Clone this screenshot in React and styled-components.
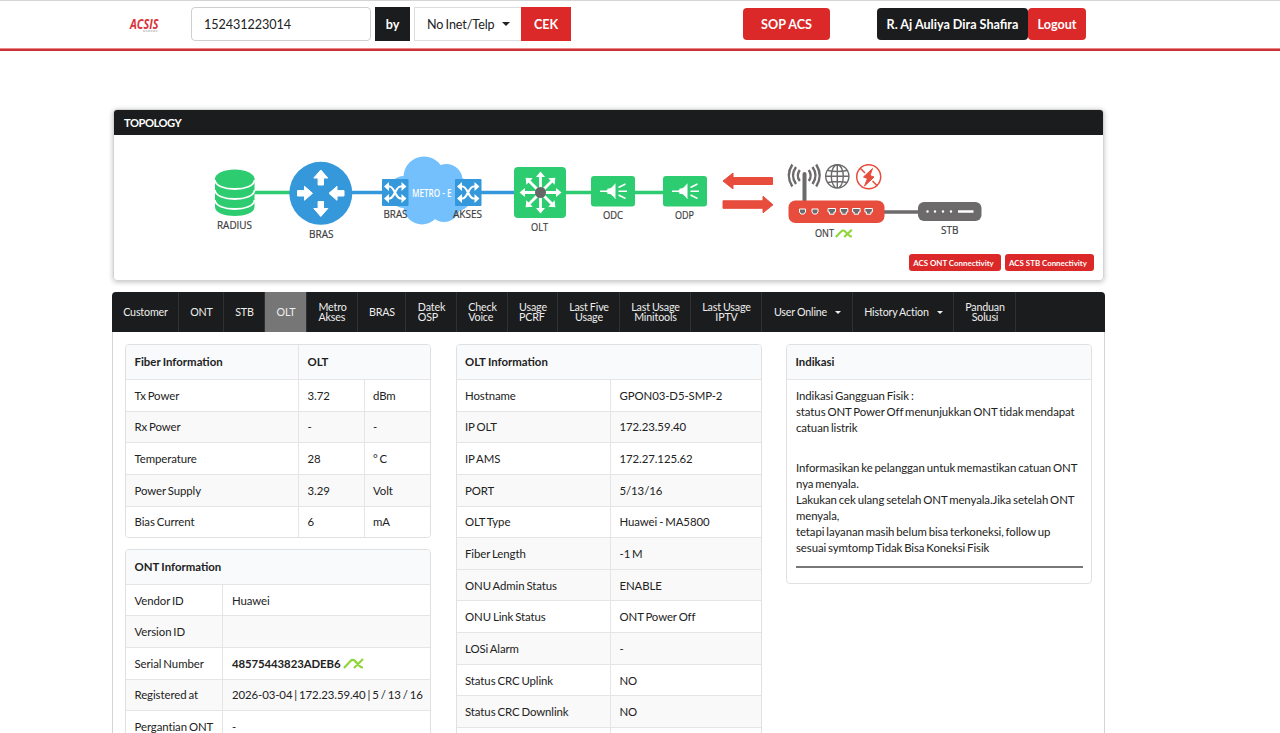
import React from "react";
import styled, { createGlobalStyle, css } from "styled-components";

const GlobalStyle = createGlobalStyle`
  * {
    box-sizing: border-box;
  }
  body {
    margin: 0;
    height: 733px;
    overflow: hidden;
    background: #fff;
    color: #222;
    font-family: Lato, "Liberation Sans", sans-serif;
    font-size: 11.4px;
    word-spacing: -0.9px;
  }
`;

const Header = styled.header`
  display: flex;
  align-items: center;
  height: 51px;
  padding: 0 0 2px 128px;
  border-top: 1px solid #d4d4d5;
  border-bottom: 2px solid #c93338;
  box-shadow: inset 0 -1px #ee8888;
  font-size: 12.6px;
`;

const Logo = styled.svg`
  width: 36px;
  height: 18px;
  margin-right: 27px;
`;

const SearchInput = styled.input`
  width: 180px;
  height: 34px;
  padding: 0 12px;
  border: 1px solid #cfcfd0;
  border-radius: 4px;
  font: inherit;
  color: #222;
  letter-spacing: -0.05px;
`;

const ByLabel = styled.span`
  display: flex;
  align-items: center;
  justify-content: center;
  width: 35px;
  height: 34px;
  margin: 0 4px;
  background: #1b1c1d;
  color: #fff;
  font-weight: 700;
`;

const Dropdown = styled.div`
  display: flex;
  align-items: center;
  width: 107px;
  height: 34px;
  padding-left: 12px;
  border: 1px solid #dededf;
  border-right: 0;
  letter-spacing: -0.1px;
  white-space: nowrap;
`;

const Caret = styled.i`
  margin-left: ${(props) => props.gap || "7px"};
  border: ${(props) => props.size || "4px"} solid transparent;
  border-top-color: currentColor;
  border-bottom: 0;
`;

const Button = styled.button`
  width: ${(props) => props.width};
  height: ${(props) => props.height || "32px"};
  margin: 0 0 0 ${(props) => props.gap || "0"};
  padding: 0;
  border: 0;
  border-radius: ${(props) => (props.square ? "0" : "4px")};
  background: ${(props) => (props.dark ? "#1b1c1d" : "#db2828")};
  color: #fff;
  font-family: inherit;
  font-size: 12.6px;
  font-weight: 700;
  white-space: nowrap;
`;

const Main = styled.main`
  width: 993px;
  margin: 58px 0 0 112px;
`;

const Topology = styled.section`
  height: 172px;
  margin: 0 1px;
  overflow: hidden;
  border: 1px solid #d4d4d5;
  border-radius: 4px;
  box-shadow: 0 1px 5px rgba(34, 36, 38, 0.3);
`;

const TopologyTitle = styled.h2`
  height: 25px;
  margin: 0;
  padding: 0 10px;
  background: #1b1c1d;
  color: #fff;
  font-size: 11.2px;
  font-weight: 700;
  letter-spacing: -0.5px;
  line-height: 26px;
`;

const Diagram = styled.svg`
  display: block;
  width: 989px;
  height: 119px;
  font-family: "Open Sans", "Noto Sans", sans-serif;
  font-size: 10.8px;
  word-spacing: 0;
`;

const Actions = styled.div`
  display: flex;
  justify-content: flex-end;
  gap: 4px;
  padding-right: 9px;
`;

const MiniButton = styled.button`
  width: ${(props) => props.width};
  height: 17px;
  padding: 0 3px 0 0;
  border: 0;
  border-radius: 3px;
  background: #db2828;
  color: #fff;
  font-family: inherit;
  font-size: 7.9px;
  font-weight: 700;
  white-space: nowrap;
`;

const Menu = styled.nav`
  display: flex;
  height: 40px;
  margin-top: 11px;
  overflow: hidden;
  border-radius: 4px 4px 0 0;
  background: #1b1c1d;
`;

const MenuItem = styled.a`
  display: flex;
  align-items: center;
  justify-content: center;
  flex: none;
  width: ${(props) => props.width}px;
  padding-left: 1px;
  border-right: 1px solid #2f3031;
  color: #eee;
  font-size: 10.7px;
  letter-spacing: -0.15px;
  word-spacing: -0.5px;
  line-height: 10px;
  text-align: ${(props) => props.align || "left"};
  white-space: pre;
  ${(props) =>
    props.active &&
    css`
      background: #767676;
    `}
`;

const Panel = styled.div`
  display: grid;
  grid-template-columns: 306px 306px 306px;
  gap: 24.5px;
  align-items: start;
  height: 420px;
  padding: 12px 12px 0;
  border: 1px solid #d4d4d5;
  border-top: 0;
  letter-spacing: -0.08px;
`;

const Column = styled.div`
  display: grid;
  gap: 10.5px;
`;

const Card = styled.section`
  overflow: hidden;
  border: 1px solid #dfe0e1;
  border-radius: 4px;
`;

const Row = styled.div`
  display: grid;
  grid-template-columns: ${(props) => props.columns};
  height: 31.65px;
  border-top: 1px solid #e5e5e6;
  background: ${(props) => (props.striped ? "#f9f9f9" : "#fff")};
`;

const Cell = styled.div`
  display: flex;
  align-items: center;
  padding-left: 8.5px;
  font-weight: ${(props) => (props.bold ? 700 : "inherit")};
  white-space: nowrap;

  & + & {
    border-left: 1px solid #e5e5e6;
  }
`;

const HeadRow = styled(Row)`
  height: 34px;
  border-top: 0;
  background: #f9fafb;
  font-weight: 700;
  letter-spacing: 0;
  word-spacing: -0.4px;

  ${Cell} {
    padding-bottom: 1px;
  }
`;

const Note = styled.div`
  padding: 8px 8px 15px 9px;
  border-top: 1px solid #e5e5e6;
  line-height: 15.95px;
  white-space: pre;
`;

const Paragraph = styled.p`
  margin: 0 0 ${(props) => props.gap || "0"};
`;

const Rule = styled.hr`
  height: 2px;
  margin: 10.5px 0 0;
  border: 0;
  background: #777;
`;

const MarkIcon = styled.svg`
  width: 21px;
  height: 11px;
  margin-left: 2px;
`;

const menuItems = [
  { label: "Customer", width: 67 },
  { label: "ONT", width: 45 },
  { label: "STB", width: 41 },
  { label: "OLT", width: 42, active: true },
  { label: "Metro\nAkses", width: 51 },
  { label: "BRAS", width: 48 },
  { label: "Datek\nOSP", width: 51 },
  { label: "Check\nVoice", width: 51 },
  { label: "Usage\nPCRF", width: 50 },
  { label: "Last Five\nUsage", width: 62, align: "center" },
  { label: "Last Usage\nMinitools", width: 71, align: "center" },
  { label: "Last Usage\nIPTV", width: 71, align: "center" },
  { label: "User Online", width: 91, dropdown: true },
  { label: "History Action", width: 101, dropdown: true },
  { label: "Panduan\nSolusi", width: 62, align: "center" },
];

const fiberRows = [
  ["Tx Power", "3.72", "dBm"],
  ["Rx Power", "-", "-"],
  ["Temperature", "28", "° C"],
  ["Power Supply", "3.29", "Volt"],
  ["Bias Current", "6", "mA"],
];

const ontRows = [
  ["Vendor ID", "Huawei"],
  ["Version ID", ""],
  ["Serial Number", "48575443823ADEB6"],
  ["Registered at", "2026-03-04 | 172.23.59.40 | 5 / 13 / 16"],
  ["Pergantian ONT", "-"],
];

const oltRows = [
  ["Hostname", "GPON03-D5-SMP-2"],
  ["IP OLT", "172.23.59.40", true],
  ["IP AMS", "172.27.125.62"],
  ["PORT", "5/13/16", true],
  ["OLT Type", "Huawei - MA5800"],
  ["Fiber Length", "-1 M", true],
  ["ONU Admin Status", "ENABLE", true],
  ["ONU Link Status", "ONT Power Off"],
  ["LOSi Alarm", "-", true],
  ["Status CRC Uplink", "NO"],
  ["Status CRC Downlink", "NO", true],
  ["", ""],
];

const markPath = "M1 10L7.500 3Q10 0.500 12.500 3.500L15 6.500Q17.500 9.500 20 9.500M11 10L20 1";

const ShuffleIcon = ({ x, y }) => (
  <g transform={`translate(${x} ${y})`}>
    <rect width="26.5" height="27" rx="1" fill="#3498db" />
    <path
      d="M5 7.5h2.5c5 0 6 12 11 12h3M5 19.5h2.5c5 0 6-12 11-12h3"
      fill="none"
      stroke="#fff"
      strokeWidth="2.2"
    />
    <path
      d="M19.500 3l5 4.500-5 4.500zM19.500 15l5 4.500-5 4.500zM7 3l-5 4.500 5 4.500zM7 15l-5 4.500 5 4.500z"
      fill="#fff"
    />
  </g>
);

const SplitterIcon = ({ x }) => (
  <g transform={`translate(${x} 176)`}>
    <rect width="44" height="30.5" rx="3" fill="#2ecc71" />
    <path d="M9 14.4h6c4-1 7-4 9.500-7.200v16c-2.500-3.200-5.500-6.200-9.500-7.200H9z" fill="#fff" />
    <path d="M16.500 12.500h5v5.500h-5z" fill="#fff" />
    <path
      d="M27.500 11.500l7-3.500M27.500 15.200h8.500M27.500 19l7 3.500"
      stroke="#fff"
      strokeWidth="1.500"
    />
  </g>
);

const portXs = [828.5, 840.8, 853.1, 865.4];
const spokes = [0, 45, 90, 135, 180, 225, 270, 315];

const TopologyDiagram = () => (
  <Diagram viewBox="114 135 989 119">
    <path d="M250 192.500h45M565 192.500h105" stroke="#2ecc71" strokeWidth="3.500" />
    <path d="M350 192.500h35M480 192.500h36" stroke="#3498db" strokeWidth="3.500" />

    <g fill="#2ecc71">
      <path d="M215 178v29c0 12 39.500 12 39.500 0v-29z" />
      <ellipse cx="234.700" cy="179" rx="19.700" ry="9.500" />
    </g>
    <path
      d="M215 180c0 12 39.500 12 39.500 0M215 190c0 12 39.500 12 39.500 0M215 200c0 12 39.500 12 39.500 0"
      fill="none"
      stroke="#fff"
      strokeWidth="1.800"
    />

    <circle cx="320.800" cy="193.300" r="31.500" fill="#3498db" />
    <g fill="#fff" stroke="#fff" strokeLinejoin="round">
      <path d="M320.800 170l7 8h-4.300v7h-5.400v-7h-4.300z" />
      <path d="M320.800 216.500l7-8h-4.300v-7h-5.400v7h-4.300z" />
      <path d="M312.500 193.300l-8-7v4.300h-7v5.400h7v4.300z" />
      <path d="M329 193.300l8-7v4.300h7v5.400h-7v4.300z" />
    </g>

    <g fill="#74c0fc">
      <circle cx="424" cy="177" r="20.500" />
      <circle cx="446.500" cy="180" r="16" />
      <circle cx="404" cy="192" r="16" />
      <circle cx="422" cy="206" r="18.500" />
      <circle cx="444" cy="206" r="16" />
      <circle cx="456" cy="194" r="17" />
    </g>
    <ShuffleIcon x={382} y={179} />
    <ShuffleIcon x={455} y={179} />
    <text
      x="412"
      y="197"
      fill="#fff"
      fontWeight="600"
      textLength="39.500"
      lengthAdjust="spacingAndGlyphs"
    >
      METRO - E
    </text>

    <rect x="514" y="167" width="52" height="51" rx="4" fill="#2ecc71" />
    {spokes.map((angle) => (
      <g key={angle} transform={`translate(540.5 192.500) rotate(${angle})`}>
        <path d="M0 0v-17" stroke="#fff" strokeWidth="2.800" />
        <path d="M-4.500-15.500L0-21l4.500 5.500z" fill="#fff" />
      </g>
    ))}
    <circle cx="540.500" cy="192.500" r="5.500" fill="#666" />

    <SplitterIcon x={591} />
    <SplitterIcon x={663} />

    <g fill="#e74c3c" stroke="#e74c3c" strokeLinejoin="round">
      <path d="M723 181l10-8v4.500h39.500v7H733v4.500z" />
      <path d="M773 204.800l-10-8.500v4.500h-40v7.500h40v4.500z" />
    </g>

    <path d="M884 212h36" stroke="#6d6a6b" strokeWidth="3.500" />
    <path d="M804.500 174v29" stroke="#6d6a6b" strokeWidth="4" strokeLinecap="round" />
    <g fill="none" stroke="#6d6a6b" strokeWidth="2.400">
      <path d="M799.800 170q-4 5.500 0 11M796 167q-6 8.500 0 17M792.300 164.500q-7 11 0 22" />
      <path d="M808.700 170q4 5.500 0 11M812.500 167q6 8.500 0 17M816.200 164.500q7 11 0 22" />
    </g>
    <g fill="none" stroke="#6d6a6b" strokeWidth="1.400">
      <circle cx="837.300" cy="176.300" r="11.600" />
      <ellipse cx="837.300" cy="176.300" rx="6" ry="11.600" />
      <path d="M837.300 165v23M826 176.300h23M828 170.500q9.500 2 19 0M828 182.500q9.500-2 19 0" />
    </g>
    <g fill="none" stroke="#e74c3c" strokeWidth="1.500">
      <circle cx="868.700" cy="176.700" r="12" />
      <path d="M860 168l5 5M872.500 181l5 5" />
    </g>
    <path
      d="M872.500 168.500l-9 8.500 4 1.500-3 7.500 9.500-9-4-1.500z"
      fill="#e74c3c"
      stroke="#e74c3c"
    />

    <rect x="788.500" y="200.500" width="96" height="22.500" rx="7" fill="#e74c3c" />
    {[802.5, 815].map((x) => (
      <path
        key={x}
        d={`M${x - 3} 209h6v3l-1.500 2h-3l-1.500-2z`}
        fill="#6d6a6b"
        stroke="#fff"
      />
    ))}
    {portXs.map((x) => (
      <path
        key={x}
        d={`M${x - 0.5} 208.500h7.500v3.500h-1.500v2.200h-4.500v-2.200h-1.500z`}
        fill="#6d6a6b"
        stroke="#fff"
      />
    ))}

    <rect x="918" y="202" width="63.500" height="19" rx="6" fill="#6d6a6b" />
    <path d="M958 211.500h15.500" stroke="#fff" strokeWidth="2.500" />
    <path
      d="M927.500 211.500h0M935 211.500h0M943 211.500h0M951 211.500h0"
      stroke="#fff"
      strokeWidth="2.500"
      strokeLinecap="round"
    />

    <g fill="#3c3c3c" stroke="#3c3c3c" strokeWidth="0.2">
      <text x="217" y="228.500" textLength="35" lengthAdjust="spacingAndGlyphs">RADIUS</text>
      <text x="309" y="238" textLength="24.500" lengthAdjust="spacingAndGlyphs">BRAS</text>
      <text x="383.500" y="217.500" textLength="24" lengthAdjust="spacingAndGlyphs">BRAS</text>
      <text x="453" y="217.500" textLength="29" lengthAdjust="spacingAndGlyphs">AKSES</text>
      <text x="531" y="231" textLength="17" lengthAdjust="spacingAndGlyphs">OLT</text>
      <text x="603" y="219" textLength="20" lengthAdjust="spacingAndGlyphs">ODC</text>
      <text x="675" y="219" textLength="19" lengthAdjust="spacingAndGlyphs">ODP</text>
      <text x="815" y="237" textLength="19" lengthAdjust="spacingAndGlyphs">ONT</text>
      <text x="941" y="234" textLength="17.500" lengthAdjust="spacingAndGlyphs">STB</text>
    </g>
    <path
      d={markPath}
      transform="translate(835 229) scale(.84 .8)"
      fill="none"
      stroke="#8fd63a"
      strokeWidth="2.600"
    />
  </Diagram>
);

const App = () => {
  return (
    <>
      <GlobalStyle />
      <Header>
        <Logo viewBox="0 0 36 18">
          <text
            x="2"
            y="14"
            fill="#d9323a"
            fontFamily="Open Sans, sans-serif"
            fontSize="13.500"
            fontWeight="700"
            fontStyle="italic"
            textLength="28.500"
            lengthAdjust="spacingAndGlyphs"
          >
            ACSIS
          </text>
          <path d="M15 16h15" stroke="#aaa" strokeDasharray="2 .5" />
        </Logo>
        <SearchInput defaultValue="152431223014" />
        <ByLabel>by</ByLabel>
        <Dropdown>
          No Inet/Telp
          <Caret />
        </Dropdown>
        <Button width="50px" height="34px" square>
          CEK
        </Button>
        <Button width="87px" gap="172px">
          SOP ACS
        </Button>
        <Button width="151px" gap="47px" dark>
          R. Aj Auliya Dira Shafira
        </Button>
        <Button width="58px">Logout</Button>
      </Header>

      <Main>
        <Topology>
          <TopologyTitle>TOPOLOGY</TopologyTitle>
          <TopologyDiagram />
          <Actions>
            <MiniButton width="92px">ACS ONT Connectivity</MiniButton>
            <MiniButton width="89px">ACS STB Connectivity</MiniButton>
          </Actions>
        </Topology>

        <Menu>
          {menuItems.map((item) => (
            <MenuItem
              key={item.label}
              width={item.width}
              align={item.align}
              active={item.active}
            >
              {item.label}
              {item.dropdown && <Caret gap="8px" size="3px" />}
            </MenuItem>
          ))}
        </Menu>

        <Panel>
          <Column>
            <Card>
              <HeadRow columns="172px 1fr">
                <Cell>Fiber Information</Cell>
                <Cell>OLT</Cell>
              </HeadRow>
              {fiberRows.map((row, idx) => (
                <Row key={row[0]} columns="172px 65.5px 1fr" striped={idx % 2}>
                  {row.map((value, i) => (
                    <Cell key={i}>{value}</Cell>
                  ))}
                </Row>
              ))}
            </Card>
            <Card>
              <HeadRow columns="1fr">
                <Cell>ONT Information</Cell>
              </HeadRow>
              {ontRows.map(([label, value], idx) => (
                <Row key={label} columns="96.4px 1fr" striped={idx % 2}>
                  <Cell>{label}</Cell>
                  <Cell bold={label === "Serial Number"}>
                    {value}
                    {label === "Serial Number" && (
                      <MarkIcon viewBox="0 0 21 11">
                        <path d={markPath} fill="none" stroke="#8fd63a" strokeWidth="2.2" />
                      </MarkIcon>
                    )}
                  </Cell>
                </Row>
              ))}
            </Card>
          </Column>

          <Card>
            <HeadRow columns="1fr">
              <Cell>OLT Information</Cell>
            </HeadRow>
            {oltRows.map(([label, value, striped]) => (
              <Row key={label} columns="153.5px 1fr" striped={striped}>
                <Cell>{label}</Cell>
                <Cell>{value}</Cell>
              </Row>
            ))}
          </Card>

          <Card>
            <HeadRow columns="1fr">
              <Cell>Indikasi</Cell>
            </HeadRow>
            <Note>
              <Paragraph gap="24px">
                {"Indikasi Gangguan Fisik :\nstatus ONT Power Off menunjukkan ONT tidak mendapat\ncatuan listrik"}
              </Paragraph>
              <Paragraph>
                {"Informasikan ke pelanggan untuk memastikan catuan ONT\nnya menyala.\nLakukan cek ulang setelah ONT menyala.Jika setelah ONT\nmenyala,\ntetapi layanan masih belum bisa terkoneksi, follow up\nsesuai symtomp Tidak Bisa Koneksi Fisik"}
              </Paragraph>
              <Rule />
            </Note>
          </Card>
        </Panel>
      </Main>
    </>
  );
};

export default App;
